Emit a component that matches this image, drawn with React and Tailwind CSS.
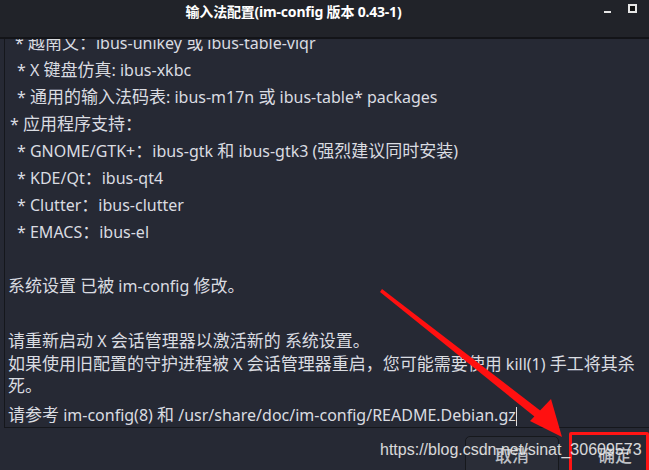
import React from "react";

function T({ children }) {
  const parts = String(children).split(/([\u3000-\u303f\u4e00-\u9fff\uff00-\uffef]+)/);
  return (
    <>
      {parts.map((p, i) =>
        i % 2 === 1 ? (
          <span key={i} className="text-[17px]">
            {p}
          </span>
        ) : (
          p
        )
      )}
    </>
  );
}

const L27 = "h-[27px] leading-[27px]";
const lines = [
  { t: "* 越南文：ibus-unikey 或 ibus-table-viqr", pl: "pl-[10px]", h: L27 },
  { t: "* X 键盘仿真: ibus-xkbc", pl: "pl-[12px]", h: L27 },
  { t: "* 通用的输入法码表: ibus-m17n 或 ibus-table* packages", pl: "pl-[12px]", h: L27 },
  { t: "* 应用程序支持：", pl: "pl-[5px]", h: L27 },
  { t: "* GNOME/GTK+：ibus-gtk 和 ibus-gtk3 (强烈建议同时安装)", pl: "pl-[12px]", h: L27 },
  { t: "* KDE/Qt：ibus-qt4", pl: "pl-[12px]", h: L27 },
  { t: "* Clutter：ibus-clutter", pl: "pl-[12px]", h: L27 },
  { t: "* EMACS：ibus-el", pl: "pl-[12px]", h: L27 },
  { t: "", pl: "", h: "h-[27px]" },
  { t: "系统设置 已被 im-config 修改。", pl: "pl-[3px]", h: L27 },
  { t: "", pl: "", h: "h-[30px]" },
  { t: "请重新启动 X 会话管理器以激活新的 系统设置。", pl: "pl-[3px]", h: "h-[24px] leading-[24px]" },
];

export default function App() {
  return (
    <div
      className="relative w-[649px] h-[470px] overflow-hidden bg-[#262934] text-[#dadce1]"
      style={{ fontFamily: '"Noto Sans", "Noto Sans CJK SC", sans-serif' }}
    >
      {/* title bar */}
      <div className="relative h-[39px] bg-[#212329] border-b-2 border-[#131418] flex justify-center pr-[62px]">
        <div className="pt-[1px] text-[14px] font-bold text-white leading-[22px] tracking-[-0.2px]">
          输入法配置(im-config 版本 0.43-1)
        </div>
        <div className="absolute right-[12px] top-[4px] flex items-start gap-[17px]">
          <div className="mt-[7px] w-[7px] h-[2px] bg-[#e6e6e6]" />
          <div className="w-[9px] h-[9px] border-2 border-[#e6e6e6] bg-[#111]" />
        </div>
      </div>

      {/* text area */}
      <div className="ml-[4px] h-[389px] border-l border-b border-[#15171c] overflow-hidden text-[16px]">
        <div className="-mt-[10px] whitespace-nowrap">
          {lines.map((l, i) => (
            <div key={i} className={`${l.h} ${l.pl}`}>
              <T>{l.t}</T>
            </div>
          ))}
          <div className="pl-[3px] leading-[21px]">
            <T>如果使用旧配置的守护进程被 X 会话管理器重启，您可能需要使用 kill(1) 手工将其杀</T>
            <br />
            <T>死。</T>
          </div>
          <div className="mt-[4px] pl-[3px] h-[27px] leading-[27px]">
            <T>请参考 im-config(8) 和 /usr/share/doc/im-config/README.Debian.gz</T>
            <span className="inline-block align-middle w-[1px] h-[19px] bg-[#e0e0e0]" />
          </div>
        </div>
      </div>

      {/* buttons */}
      <div className="flex justify-end items-start pt-[8px] gap-[10px]">
        <div className="w-[94px] h-[40px] rounded-[5px] border border-[#16181c] bg-[#2a2d37] flex justify-center pt-[6px] text-[17px] font-medium text-[#bfc1c6]">
          取消
        </div>
        <div className="-mt-[4px] w-[80px] h-[44px] border-[3px] border-[#ff1414] rounded-[2px] flex justify-center pt-[8px] pl-[12px] text-[17px] font-medium text-[#bfc1c6]">
          确定
        </div>
      </div>

      {/* watermark */}
      <div
        className="absolute left-[380px] top-[440px] text-[16px] leading-[20px] text-[#ececec] opacity-90 whitespace-nowrap"
        style={{ fontFamily: '"Liberation Sans", Arial, sans-serif' }}
      >
        https://blog.csdn.net/sinat_30609573
      </div>

      {/* red arrow annotation */}
      <svg className="absolute left-0 top-0" width="649" height="470">
        <polygon points="380,292 382,289 546,415 540,421" fill="#ff1010" />
        <polygon points="562,437 530,421 551,399" fill="#ff1010" />
      </svg>
    </div>
  );
}
